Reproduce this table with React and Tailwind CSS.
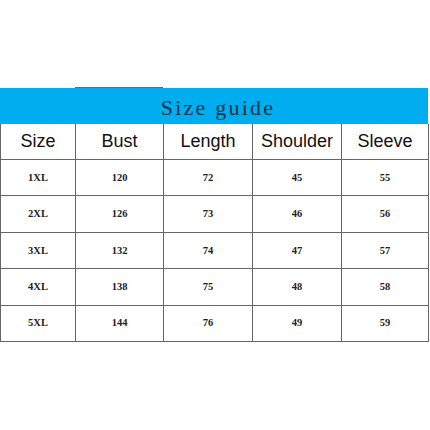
import React from 'react'

const headers = ['Size', 'Bust', 'Length', 'Shoulder', 'Sleeve']

const rows = [
  ['1XL', '120', '72', '45', '55'],
  ['2XL', '126', '73', '46', '56'],
  ['3XL', '132', '74', '47', '57'],
  ['4XL', '138', '75', '48', '58'],
  ['5XL', '144', '76', '49', '59'],
]

export default function App() {
  return (
    <div className="w-[430px] h-[430px] bg-white pt-[87px]">
      <div className="ml-[75px] w-[88px] h-px bg-[#6a6a6a]" />
      <div className="w-[428px] h-[36px] bg-[#00adef] flex items-center justify-center">
        <span
          className="text-[22px] tracking-[2.2px] text-[#1d3447] pl-[8px] pt-[2px]"
          style={{ fontFamily: '"Liberation Serif", "Times New Roman", serif' }}
        >
          Size guide
        </span>
      </div>
      <div className="w-[429px] grid grid-cols-[75px_88px_89px_89px_87px] border-l border-[#666]">
        {headers.map((h) => (
          <div
            key={h}
            className="h-[36px] flex items-center justify-center border-r border-b border-[#666] text-[18px] text-[#111]"
            style={{ fontFamily: '"Liberation Sans", Arial, sans-serif' }}
          >
            {h}
          </div>
        ))}
        {rows.map((row) =>
          row.map((cell, i) => (
            <div
              key={row[0] + i}
              className="h-[36.4px] flex items-center justify-center border-r border-b border-[#666] text-[10.5px] font-bold text-[#222]"
              style={{ fontFamily: '"Liberation Serif", "Times New Roman", serif' }}
            >
              {cell}
            </div>
          ))
        )}
      </div>
    </div>
  )
}
